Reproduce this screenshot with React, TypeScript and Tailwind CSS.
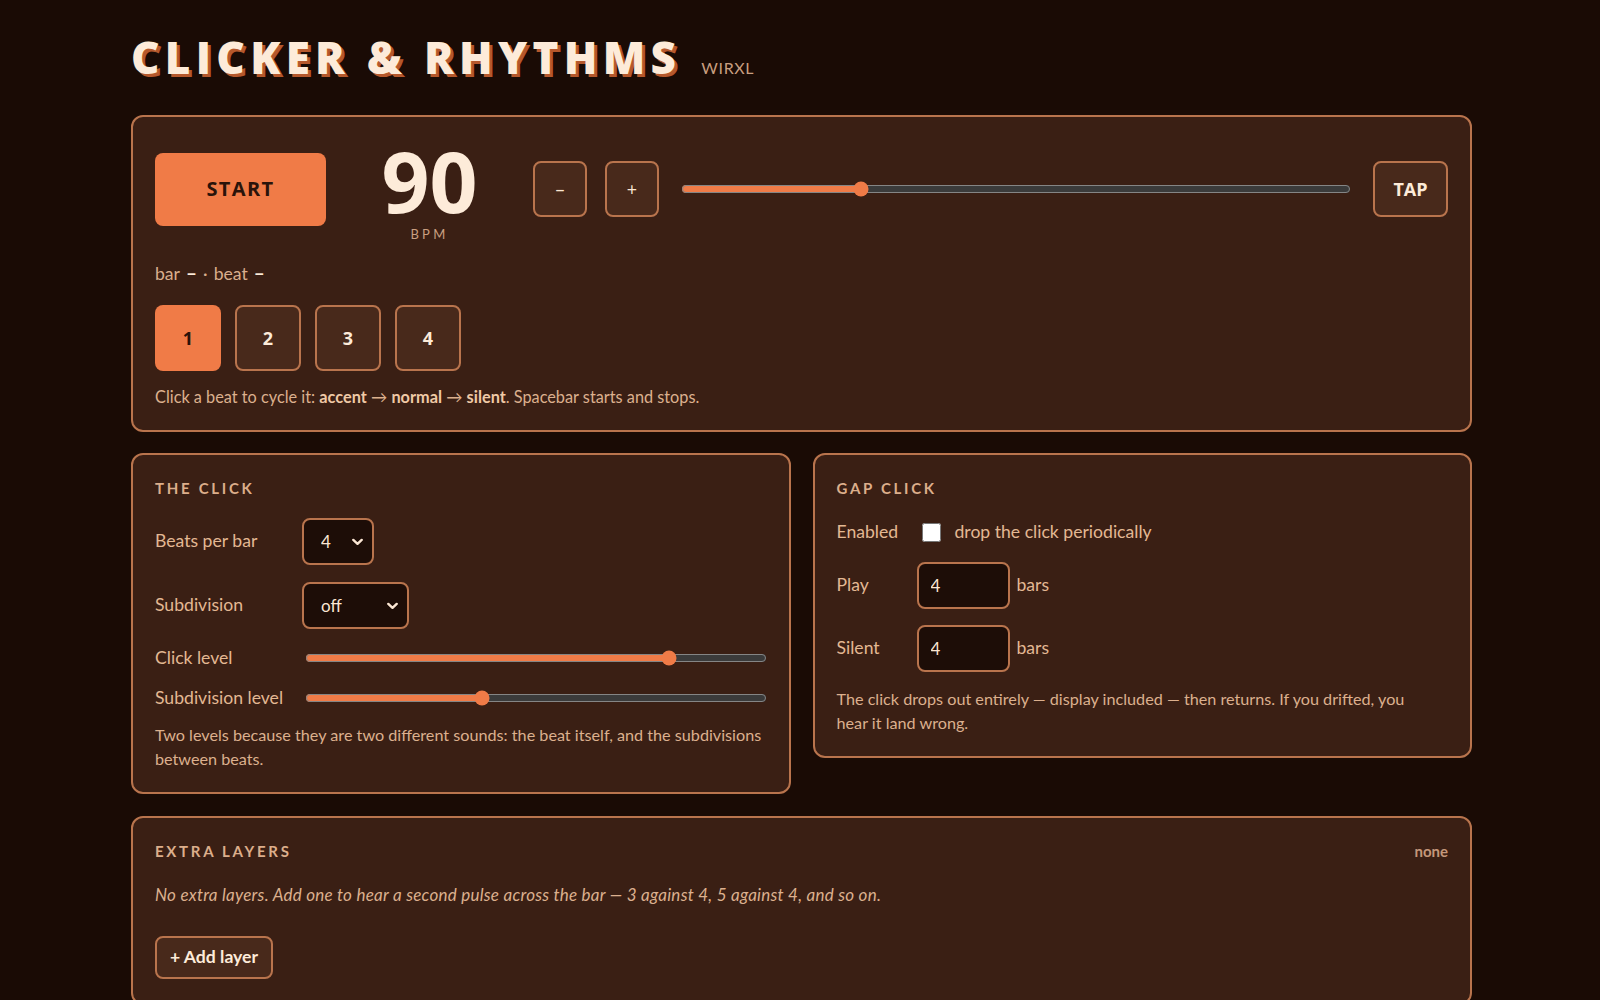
import React from "react";

const Chevron = () => (
  <svg width="11" height="7" viewBox="0 0 11 7" className="pointer-events-none absolute right-[11px] top-1/2 -translate-y-1/2" fill="none">
    <path d="M1.3 1.3 L5.5 5.3 L9.7 1.3" stroke="#fbe6d3" strokeWidth="2.4" strokeLinecap="round" strokeLinejoin="round" />
  </svg>
);

const Card = ({ className = "", children }: { className?: string; children: React.ReactNode }) => (
  <section className={"rounded-[12px] border-2 border-[#b9744d] bg-[#3a1f14] px-[22px] " + className}>{children}</section>
);

const Heading = ({ children }: { children: React.ReactNode }) => (
  <h2 className="text-[15px] leading-[20px] font-bold tracking-[0.18em] text-[#dcae8b] uppercase">{children}</h2>
);

export default function App() {
  return (
    <div className="min-h-screen bg-[#1a0b05] pl-[3px] font-['Lato','Liberation_Sans',sans-serif] text-[#e3b893]">
      <div className="w-[1341px] mx-auto pt-[35px] pb-[40px]">
        <header className="flex items-baseline gap-[20px] mb-[35px]">
          <h1 className="font-['Open_Sans',sans-serif] text-[44px] leading-[44px] font-extrabold tracking-[0.12em] text-[#fdebd9] [text-shadow:3px_3px_0_#b5582c]">
            CLICKER &amp; RHYTHMS
          </h1>
          <span className="text-[16px] tracking-[0.04em] text-[#c99f80]">WIRXL</span>
        </header>

        <div className="flex flex-col">
          <Card className="pt-[19px] pb-[21px]">
            <div className="flex items-center gap-[18px]">
              <button className="w-[171px] h-[73px] rounded-[8px] bg-[#f07b47] font-['Open_Sans',sans-serif] text-[20px] font-bold tracking-[0.07em] text-[#2a130a]">
                START
              </button>
              <div className="w-[171px] mt-[12px] flex flex-col items-center">
                <div className="font-['Open_Sans',sans-serif] text-[84px] leading-[66px] font-bold text-[#fdebd9]">90</div>
                <div className="mt-[12px] text-[13px] leading-[16px] tracking-[0.25em] text-[#c99f80]">BPM</div>
              </div>
              <button className="w-[54px] h-[56px] rounded-[8px] border-2 border-[#b9744d] bg-[#48291b] text-[18px] text-[#fbe6d3] font-['Open_Sans',sans-serif]">
                –
              </button>
              <button className="w-[54px] h-[56px] rounded-[8px] border-2 border-[#b9744d] bg-[#48291b] text-[18px] text-[#fbe6d3] font-['Open_Sans',sans-serif]">
                +
              </button>
              <input
                type="range"
                min={40}
                max={230}
                defaultValue={90}
                className="flex-1 mx-[4px] accent-[#f07b47] [color-scheme:dark]"
              />
              <button className="w-[75px] h-[56px] rounded-[8px] border-2 border-[#b9744d] bg-[#48291b] font-['Open_Sans',sans-serif] text-[18px] font-bold text-[#fdebd9]">
                TAP
              </button>
            </div>

            <div className="mt-[20px] h-[24px] text-[17.6px] leading-[24px] text-[#d9ae8d]">
              bar<b className="ml-[6px] text-[19px] leading-none text-[#fdebd9]">–</b><span className="mx-[6px]">·</span>beat<b className="ml-[6px] text-[19px] leading-none text-[#fdebd9]">–</b>
            </div>

            <div className="mt-[19px] flex gap-[14px]">
              <button className="w-[66px] h-[66px] rounded-[8px] bg-[#f07b47] font-['Open_Sans',sans-serif] text-[18px] font-bold text-[#2a130a]">1</button>
              {["2", "3", "4"].map((n) => (
                <button key={n} className="w-[66px] h-[66px] rounded-[8px] border-2 border-[#b9744d] bg-[#48291b] font-['Open_Sans',sans-serif] text-[18px] font-bold text-[#fdebd9]">
                  {n}
                </button>
              ))}
            </div>

            <p className="mt-[14px] text-[16.3px] leading-[24px] text-[#dcb08e]">
              Click a beat to cycle it: <b className="text-[#efc9a6]">accent</b> → <b className="text-[#efc9a6]">normal</b> → <b className="text-[#efc9a6]">silent</b>. Spacebar starts and stops.
            </p>
          </Card>

          <div className="mt-[21px] grid grid-cols-2 gap-[22px] items-start">
            <Card className="pt-[23px] pb-[21px]">
              <Heading>The Click</Heading>
              <div className="mt-[20px] flex flex-col gap-[17px]">
                <div className="flex items-center">
                  <span className="w-[147px] text-[17.6px]">Beats per bar</span>
                  <div className="relative">
                    <select defaultValue="4" className="appearance-none w-[72px] h-[47px] rounded-[8px] border-2 border-[#b9744d] bg-[#1d0d07] pl-[17px] text-[17px] text-[#fbe6d3] outline-none">
                      <option>2</option>
                      <option>3</option>
                      <option>4</option>
                      <option>5</option>
                    </select>
                    <Chevron />
                  </div>
                </div>
                <div className="flex items-center">
                  <span className="w-[147px] text-[17.6px]">Subdivision</span>
                  <div className="relative">
                    <select defaultValue="off" className="appearance-none w-[107px] h-[47px] rounded-[8px] border-2 border-[#b9744d] bg-[#1d0d07] pl-[17px] text-[17px] text-[#fbe6d3] outline-none">
                      <option>off</option>
                      <option>8ths</option>
                      <option>16ths</option>
                    </select>
                    <Chevron />
                  </div>
                </div>
                <div className="flex items-center h-[24px]">
                  <span className="w-[147px] text-[17.6px]">Click level</span>
                  <input type="range" min={0} max={100} defaultValue={80} className="flex-1 ml-[3px] mr-0 accent-[#f07b47] [color-scheme:dark]" />
                </div>
                <div className="flex items-center h-[24px] -mt-[1px]">
                  <span className="w-[147px] text-[17.6px]">Subdivision level</span>
                  <input type="range" min={0} max={100} defaultValue={38} className="flex-1 ml-[3px] mr-0 accent-[#f07b47] [color-scheme:dark]" />
                </div>
              </div>
              <p className="mt-[13px] text-[16.2px] leading-[24px] text-[#dcb08e]">
                Two levels because they are two different sounds: the beat itself, and the subdivisions between beats.
              </p>
            </Card>

            <Card className="pt-[23px] pb-[21px]">
              <Heading>Gap Click</Heading>
              <div className="mt-[22px] flex flex-col gap-[18px]">
                <div className="flex items-center h-[24px]">
                  <span className="w-[80px] text-[17.6px]">Enabled</span>
                  <input type="checkbox" className="ml-[5px] w-[19px] h-[19px] m-0" />
                  <span className="ml-[14px] text-[17.6px]">drop the click periodically</span>
                </div>
                <div className="flex flex-col gap-[16px]">
                  <div className="flex items-center">
                    <span className="w-[80px] text-[17.6px]">Play</span>
                    <input type="text" defaultValue="4" className="w-[93px] h-[47px] rounded-[8px] border-2 border-[#b9744d] bg-[#1d0d07] pl-[12px] text-[17px] text-[#fbe6d3] outline-none" />
                    <span className="ml-[7px] text-[17.6px]">bars</span>
                  </div>
                  <div className="flex items-center">
                    <span className="w-[80px] text-[17.6px]">Silent</span>
                    <input type="text" defaultValue="4" className="w-[93px] h-[47px] rounded-[8px] border-2 border-[#b9744d] bg-[#1d0d07] pl-[12px] text-[17px] text-[#fbe6d3] outline-none" />
                    <span className="ml-[7px] text-[17.6px]">bars</span>
                  </div>
                </div>
              </div>
              <p className="mt-[15px] text-[16.2px] leading-[24px] text-[#dcb08e]">
                The click drops out entirely — display included — then returns. If you drifted, you
                <br />
                hear it land wrong.
              </p>
            </Card>
          </div>

          <Card className="mt-[22px] pt-[22px] pb-[24px]">
            <div className="flex items-center justify-between">
              <Heading>Extra Layers</Heading>
              <span className="text-[15px] font-bold text-[#c4977a]">none</span>
            </div>
            <p className="mt-[20px] text-[17px] leading-[24px] italic tracking-[0.015em] text-[#dcb08e]">
              No extra layers. Add one to hear a second pulse across the bar — 3 against 4, 5 against 4, and so on.
            </p>
            <button className="mt-[29px] w-[118px] h-[43px] rounded-[8px] border-2 border-[#b9744d] bg-[#48291b] text-[17.6px] font-bold text-[#fdebd9]">
              + Add layer
            </button>
          </Card>
        </div>
      </div>
    </div>
  );
}
